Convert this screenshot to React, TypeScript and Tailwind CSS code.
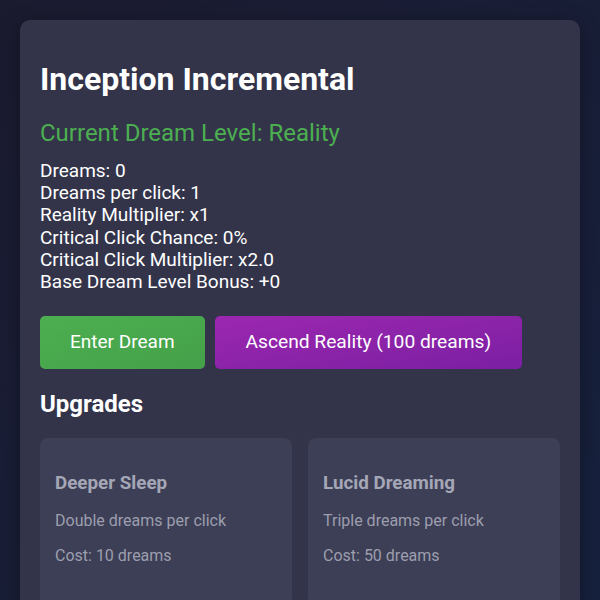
import React from "react";

const stats = [
  "Dreams: 0",
  "Dreams per click: 1",
  "Reality Multiplier: x1",
  "Critical Click Chance: 0%",
  "Critical Click Multiplier: x2.0",
  "Base Dream Level Bonus: +0",
];

const upgrades = [
  { name: "Deeper Sleep", desc: "Double dreams per click", cost: "Cost: 10 dreams" },
  { name: "Lucid Dreaming", desc: "Triple dreams per click", cost: "Cost: 50 dreams" },
];

export default function App() {
  return (
    <div
      className="w-[600px] h-[600px] overflow-hidden bg-gradient-to-br from-[#1b1b30] to-[#16213e] pt-[20px] px-[20px] text-white"
      style={{ fontFamily: "Roboto, 'Noto Sans', sans-serif" }}
    >
      <div className="rounded-[10px] bg-[#33344a] px-[20px] pt-[20px] pb-[20px] shadow-[0_4px_20px_rgba(0,0,0,0.35)]">
        <h1 className="mt-[21px] text-[32px] leading-[37px] font-bold text-white">Inception Incremental</h1>
        <h2 className="mt-[21px] text-[24px] leading-[28px] font-normal text-[#4caf50]">
          Current Dream Level: Reality
        </h2>
        <div className="mt-[13px] flex flex-col text-[19px] leading-[22.2px] text-white">
          {stats.map((s) => (
            <div key={s}>{s}</div>
          ))}
        </div>
        <div className="mt-[23px] flex gap-[10px]">
          <button className="rounded-[5px] bg-gradient-to-br from-[#4caf50] to-[#45a049] px-[30px] h-[53px] text-[19px] text-white">
            Enter Dream
          </button>
          <button className="rounded-[5px] bg-gradient-to-br from-[#9c27b0] to-[#7b1fa2] px-[31px] h-[53px] text-[19.2px] text-white">
            Ascend Reality (100 dreams)
          </button>
        </div>
        <h2 className="mt-[21px] text-[24px] leading-[28px] font-bold text-white">Upgrades</h2>
        <div className="mt-[20px] grid grid-cols-2 gap-[16px]">
          {upgrades.map((u) => (
            <div key={u.name} className="rounded-[8px] bg-[#3d3f56] px-[15px] pt-[35px] pb-[40px]">
              <div className="text-[18.8px] leading-[21px] font-bold text-[#a5a7b6]">{u.name}</div>
              <div className="mt-[17px] text-[16px] leading-[19px] text-[#9c9eae]">{u.desc}</div>
              <div className="mt-[16px] text-[16px] leading-[19px] text-[#9c9eae]">{u.cost}</div>
            </div>
          ))}
        </div>
      </div>
    </div>
  );
}
